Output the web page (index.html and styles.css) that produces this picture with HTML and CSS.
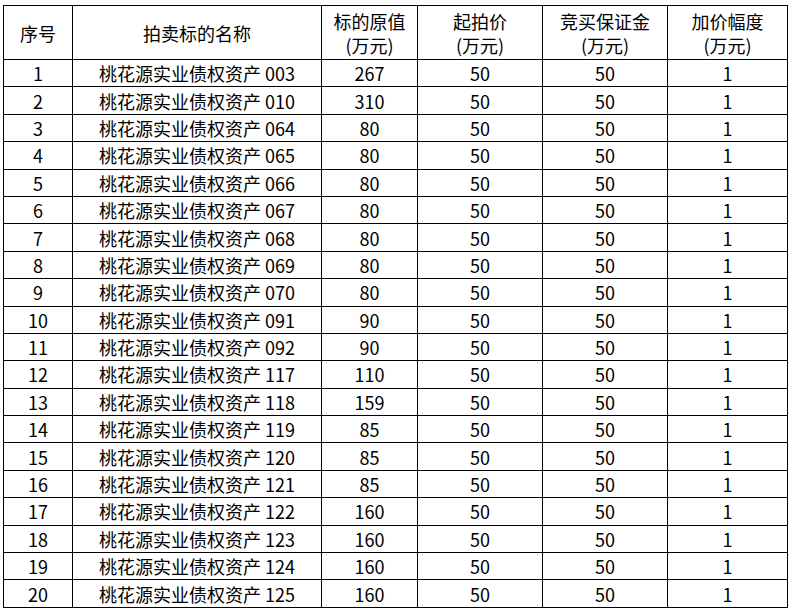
FILE: index.html
```html
<!DOCTYPE html>
<html lang="zh">
<head>
<meta charset="utf-8">
<link rel="stylesheet" href="styles.css">
</head>
<body>
<table class="grid">
<colgroup>
<col class="c1"><col class="c2"><col class="c3"><col class="c4"><col class="c5"><col class="c6">
</colgroup>
<thead>
<tr><th>序号</th><th>拍卖标的名称</th><th>标的原值<br>(万元)</th><th>起拍价<br>(万元)</th><th>竞买保证金<br>(万元)</th><th>加价幅度<br>(万元)</th></tr>
</thead>
<tbody>
<tr><td>1</td><td>桃花源实业债权资产 003</td><td>267</td><td>50</td><td>50</td><td>1</td></tr>
<tr><td>2</td><td>桃花源实业债权资产 010</td><td>310</td><td>50</td><td>50</td><td>1</td></tr>
<tr><td>3</td><td>桃花源实业债权资产 064</td><td>80</td><td>50</td><td>50</td><td>1</td></tr>
<tr><td>4</td><td>桃花源实业债权资产 065</td><td>80</td><td>50</td><td>50</td><td>1</td></tr>
<tr><td>5</td><td>桃花源实业债权资产 066</td><td>80</td><td>50</td><td>50</td><td>1</td></tr>
<tr><td>6</td><td>桃花源实业债权资产 067</td><td>80</td><td>50</td><td>50</td><td>1</td></tr>
<tr><td>7</td><td>桃花源实业债权资产 068</td><td>80</td><td>50</td><td>50</td><td>1</td></tr>
<tr><td>8</td><td>桃花源实业债权资产 069</td><td>80</td><td>50</td><td>50</td><td>1</td></tr>
<tr><td>9</td><td>桃花源实业债权资产 070</td><td>80</td><td>50</td><td>50</td><td>1</td></tr>
<tr><td>10</td><td>桃花源实业债权资产 091</td><td>90</td><td>50</td><td>50</td><td>1</td></tr>
<tr><td>11</td><td>桃花源实业债权资产 092</td><td>90</td><td>50</td><td>50</td><td>1</td></tr>
<tr><td>12</td><td>桃花源实业债权资产 117</td><td>110</td><td>50</td><td>50</td><td>1</td></tr>
<tr><td>13</td><td>桃花源实业债权资产 118</td><td>159</td><td>50</td><td>50</td><td>1</td></tr>
<tr><td>14</td><td>桃花源实业债权资产 119</td><td>85</td><td>50</td><td>50</td><td>1</td></tr>
<tr><td>15</td><td>桃花源实业债权资产 120</td><td>85</td><td>50</td><td>50</td><td>1</td></tr>
<tr><td>16</td><td>桃花源实业债权资产 121</td><td>85</td><td>50</td><td>50</td><td>1</td></tr>
<tr><td>17</td><td>桃花源实业债权资产 122</td><td>160</td><td>50</td><td>50</td><td>1</td></tr>
<tr><td>18</td><td>桃花源实业债权资产 123</td><td>160</td><td>50</td><td>50</td><td>1</td></tr>
<tr><td>19</td><td>桃花源实业债权资产 124</td><td>160</td><td>50</td><td>50</td><td>1</td></tr>
<tr><td>20</td><td>桃花源实业债权资产 125</td><td>160</td><td>50</td><td>50</td><td>1</td></tr>
</tbody>
</table>
</body>
</html>
```
FILE: styles.css
```css
html, body {
  margin: 0;
  padding: 0;
  background: #fff;
}
body {
  padding: 5px 0 0 3px;
  font-family: "Noto Sans CJK SC", "Noto Sans", sans-serif;
  color: #000;
}
.grid {
  border-collapse: collapse;
  table-layout: fixed;
  width: 784px;
  font-size: 18px;
}
.c1 { width: 69px; }
.c2 { width: 249px; }
.c3 { width: 96px; }
.c4 { width: 125px; }
.c5 { width: 125px; }
.c6 { width: 120px; }
.grid th, .grid td {
  border: 1.5px solid #000;
  padding: 0;
  text-align: center;
  font-weight: normal;
  white-space: nowrap;
}
.grid th {
  height: 53px;
  line-height: 24px;
}
.grid td {
  height: 26.4px;
  line-height: 26px;
}
```
